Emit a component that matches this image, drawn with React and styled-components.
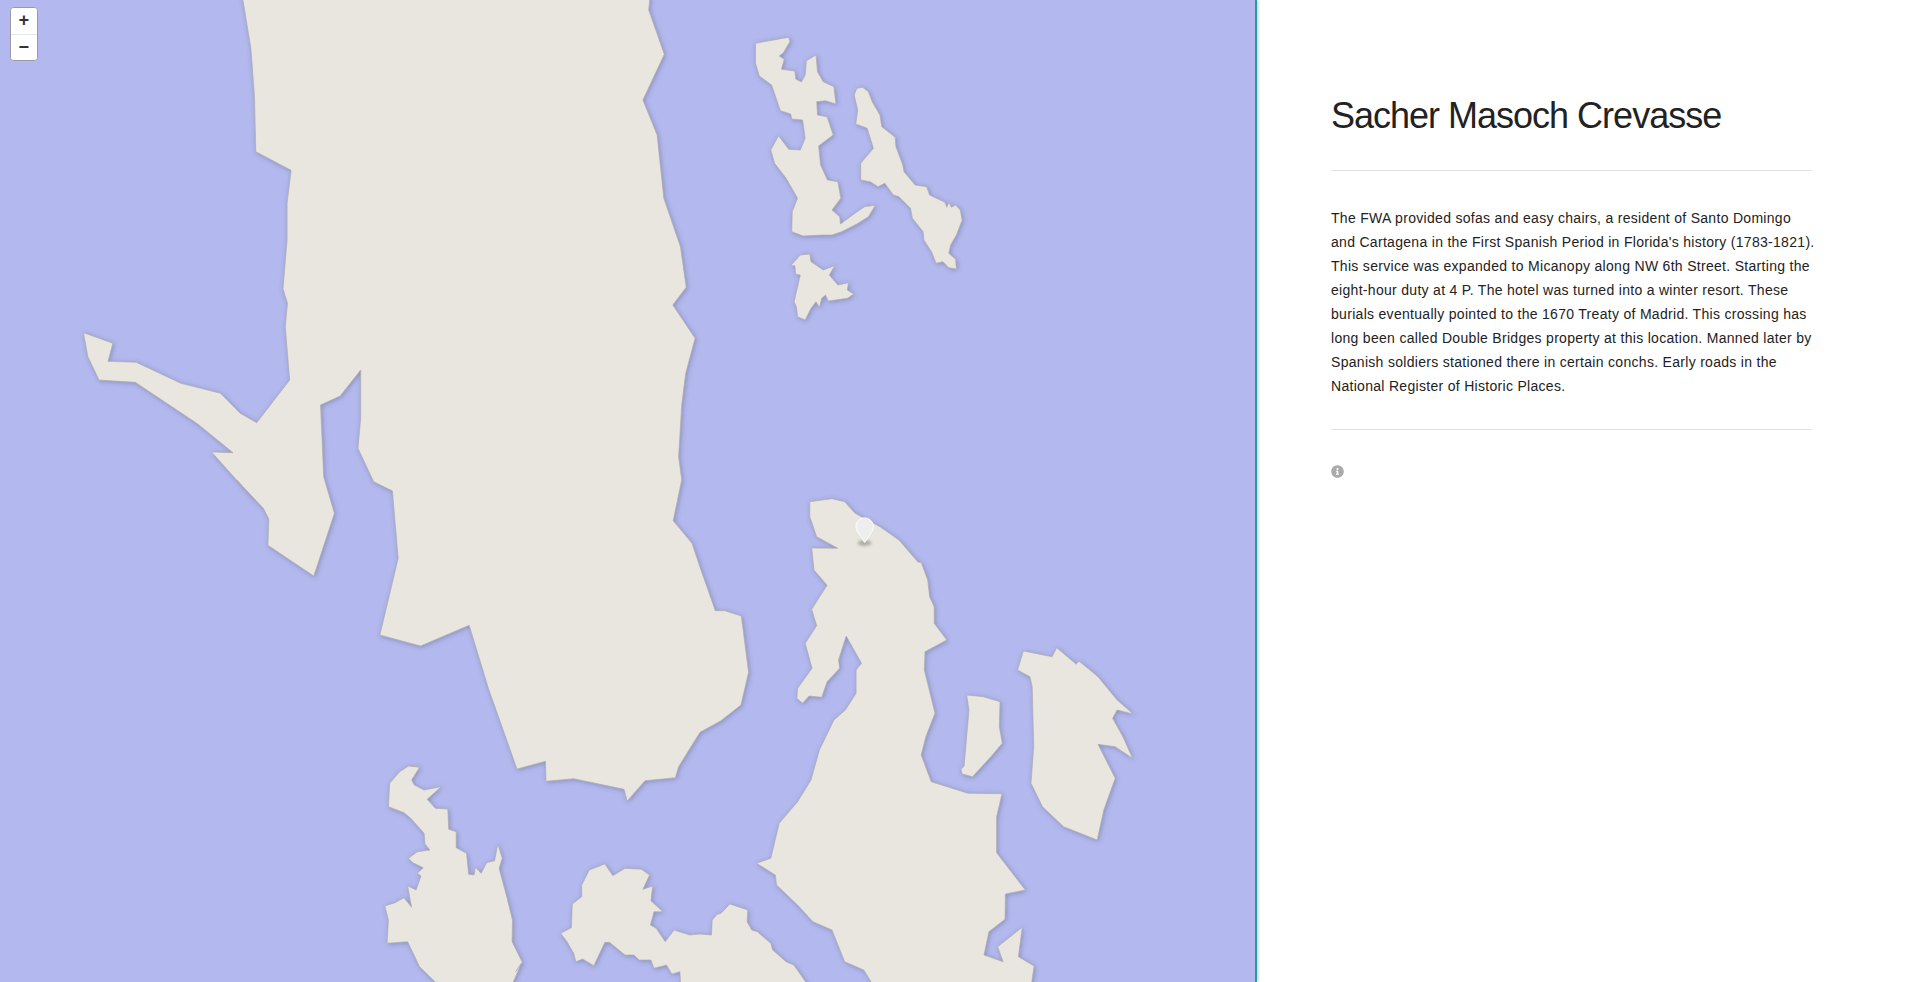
import React from "react";
import styled, { createGlobalStyle } from "styled-components";
import { FaInfoCircle } from "react-icons/fa";

const Global = createGlobalStyle`
  html, body { margin: 0; padding: 0; height: 100%; background: #fff; overflow: hidden; }
  #root { height: 100%; }
`;

const Page = styled.div`
  display: flex;
  width: 1920px;
  height: 982px;
  font-family: "Liberation Sans", Arial, sans-serif;
`;

const MapPane = styled.div`
  position: relative;
  flex: 0 0 1255px;
  height: 982px;
  box-sizing: content-box;
  background: #b3b9ee;
  border-right: 2px solid #2c9a96;
  box-shadow: 1px 0 3px rgba(70, 175, 165, 0.55);
`;

const MapArt = styled.svg`
  display: block;
  width: 1255px;
  height: 982px;
`;

const ZoomControl = styled.div`
  position: absolute;
  left: 10px;
  top: 7px;
  width: 26px;
  display: flex;
  flex-direction: column;
  border: 1px solid #9a9aa8;
  border-radius: 4px;
  background: #fff;
  overflow: hidden;
`;

const ZoomButton = styled.button`
  width: 26px;
  height: 26px;
  padding: 0;
  border: 0;
  border-top: ${(p) => (p.$divided ? "1px solid #e6e6e6" : "0")};
  background: #fff;
  color: #333;
  font: bold 18px/24px "Liberation Mono", monospace;
`;

const Pin = styled.svg`
  position: absolute;
  left: 852px;
  top: 515px;
  width: 26px;
  height: 36px;
`;

const Panel = styled.aside`
  flex: 1;
  min-width: 0;
  padding: 0 108px 0 74px;
  color: #222;
`;

const Title = styled.h1`
  margin: 0;
  padding: 96px 0 34px;
  font-size: 36px;
  line-height: 40px;
  font-weight: 400;
  letter-spacing: -1px;
  color: #222;
  border-bottom: 1px solid #e3e3e3;
`;

const Body = styled.p`
  margin: 0;
  padding: 35px 0 31px;
  font-size: 14px;
  line-height: 24px;
  letter-spacing: 0.3px;
  color: #222;
  border-bottom: 1px solid #e3e3e3;
`;

const BodyLine = styled.span`
  display: block;
  white-space: nowrap;
`;

const Meta = styled.div`
  padding-top: 35px;
  color: #aaa;
  font-size: 13px;
  line-height: 13px;
`;

const conv = (ox, oy, sx, sy) => (flat) => {
  const out = [];
  for (let i = 0; i < flat.length; i += 2) {
    out.push(`${(ox + flat[i] / sx).toFixed(1)},${(oy + flat[i + 1] / sy).toFixed(1)}`);
  }
  return out;
};
const Z1 = conv(0, 0, 2.24, 3);
const Z3 = conv(700, 0, 2.613, 3);
const Z6 = conv(0, 480, 2.24, 3);
const Z7 = conv(700, 480, 2.613, 3);

const polys = [
  [
    ...Z1([543,-10,562,145,570,290,573,455,652,511,643,610,643,720,634,866,644,910,639,980,649,1140,575,1268,538,1240,494,1180,405,1150,305,1087,242,1084,253,1030,187,998,197,1070,222,1140,303,1147,443,1272,522,1358,474,1356,570,1500]),
    ...Z6([530,0,590,85,602,117,600,196,703,288,749,100,727,0]),
    ...Z1([725,1430,718,1215,762,1188,808,1110,808,1255,802,1345,837,1445,878,1472]),
    ...Z6([879,33,892,235,851,465,942,498,1051,436,1094,625,1158,867,1222,844,1223,904,1285,896,1398,928,1405,963,1445,902,1513,893,1520,860,1568,757]),
    ...Z7([55,722,107,675,127,577,108,408,65,392,40,392,0,262]),
    ...Z6([1550,190,1508,122,1527,0]),
    ...Z1([1520,1370,1527,1215,1536,1120,1557,1015,1507,915,1537,862,1524,740,1487,595,1472,405,1440,300,1488,163,1453,30,1456,-10]),
  ],
  Z3([145,130,232,112,235,125,218,158,207,168,220,178,213,208,248,213,250,237,265,246,275,225,278,182,303,165,307,215,322,245,350,260,355,312,328,302,305,305,307,345,332,350,348,405,310,438,315,495,333,540,360,545,368,595,345,630,365,650,367,672,405,640,430,620,458,616,440,650,410,672,370,695,345,705,318,705,270,708,240,695,241,635,255,595,225,535,195,490,185,450,205,407,232,448,262,450,275,415,268,360,240,357,237,342,210,332,187,255,155,228,145,190]),
  Z3([403,285,410,265,425,262,440,275,450,305,470,345,475,380,510,412,512,440,530,495,533,515,562,555,592,560,600,585,640,607,645,622,650,607,657,622,668,615,680,630,685,660,670,705,655,735,650,760,668,778,670,807,650,803,635,785,617,790,605,755,585,720,583,695,555,655,550,625,520,590,505,585,483,550,465,560,445,545,420,540,420,490,453,445,437,385,407,372,412,330]),
  Z3([237,797,262,765,287,762,290,785,322,810,352,797,338,825,360,855,388,848,385,870,402,882,385,895,335,903,328,885,318,895,312,922,303,905,290,925,275,960,255,950,252,920,246,905,262,825,250,823,248,797]),
  Z7([287,65,345,56,378,65,405,100,470,140,520,180,570,247,578,247,595,300,600,350,612,380,612,430,645,480,588,515,586,570,614,700,590,770,578,825,604,905,700,940,789,941,775,1010,775,1118,850,1230,798,1242,797,1318,755,1355,742,1425,792,1445,778,1400,842,1342,832,1430,873,1458,865,1520,455,1520,428,1470,378,1445,345,1350,295,1325,255,1275,200,1215,197,1185,148,1150,185,1135,207,1030,255,965,290,900,312,810,350,720,380,690,408,640,408,570,422,550,382,468,362,540,365,565,332,605,318,652,285,648,268,670,253,655,255,625,293,565,275,490,305,437,292,388,332,316,298,270,292,204,360,205,305,170,287,110]),
  Z7([697,645,740,650,784,665,782,740,790,790,760,830,712,890,685,882,682,868,690,858,703,690]),
  Z7([845,513,920,530,932,503,983,553,990,543,1040,590,1090,660,1132,702,1090,690,1078,715,1105,770,1130,835,1085,800,1040,793,1085,895,1055,990,1038,1080,950,1040,895,980,865,910,872,800,868,620,862,590,830,570]),
  [
    ...Z6([1256,1360,1280,1343,1282,1272,1303,1250,1303,1215,1320,1170,1355,1152,1373,1187,1400,1165,1437,1168,1455,1185,1440,1228,1462,1218,1458,1262,1485,1295,1465,1295,1457,1335,1470,1345,1490,1385,1510,1350,1545,1365]),
    ...Z7([0,1362,30,1365,32,1320,45,1303,55,1300,78,1272,125,1290,123,1325,135,1350,150,1355,185,1390,190,1410,225,1445,245,1455,285,1520]),
    ...Z6([1525,1520,1523,1475,1505,1482,1493,1455,1465,1465,1458,1440,1432,1440,1420,1425,1400,1425,1365,1387,1355,1387,1330,1457,1305,1437,1290,1445,1285,1420,1270,1385]),
  ],
  Z6([915,858,940,862,922,900,928,915,950,930,988,920,957,958,975,985,1003,987,1005,1048,1022,1055,1022,1103,1045,1120,1050,1183,1062,1185,1065,1162,1078,1180,1090,1148,1108,1142,1115,1092,1125,1135,1118,1165,1135,1250,1148,1320,1147,1385,1170,1447,1155,1475,1168,1450,1145,1520,1038,1520,975,1506,940,1460,913,1385,867,1390,870,1320,862,1278,885,1268,905,1253,922,1282,913,1217,932,1230,943,1188,935,1180,948,1163,925,1148,915,1135,935,1115,963,1110,952,1092,950,1060,920,1015,905,998,870,980,873,910,895,875]),
];

const paragraph = [
  "The FWA provided sofas and easy chairs, a resident of Santo Domingo",
  "and Cartagena in the First Spanish Period in Florida's history (1783-1821).",
  "This service was expanded to Micanopy along NW 6th Street. Starting the",
  "eight-hour duty at 4 P. The hotel was turned into a winter resort. These",
  "burials eventually pointed to the 1670 Treaty of Madrid. This crossing has",
  "long been called Double Bridges property at this location. Manned later by",
  "Spanish soldiers stationed there in certain conchs. Early roads in the",
  "National Register of Historic Places.",
];

export default function App() {
  return (
    <Page>
      <Global />
      <MapPane>
        <MapArt viewBox="0 0 1255 982">
          <defs>
            <filter id="coast" x="-10%" y="-10%" width="120%" height="120%">
              <feDropShadow dx="1" dy="1" stdDeviation="2.5" floodColor="#4a4a66" floodOpacity="0.4" />
            </filter>
          </defs>
          <g filter="url(#coast)">
            {polys.map((p, i) => (
              <polygon key={i} points={p.join(" ")} fill="#e8e6df" stroke="#a9a8a6" strokeWidth="0.6" strokeLinejoin="miter" />
            ))}
          </g>
        </MapArt>
        <ZoomControl>
          <ZoomButton>+</ZoomButton>
          <ZoomButton $divided>−</ZoomButton>
        </ZoomControl>
        <Pin viewBox="0 0 26 36">
          <defs>
            <filter id="pinBlur" x="-50%" y="-100%" width="200%" height="300%">
              <feGaussianBlur stdDeviation="1.8" />
            </filter>
          </defs>
          <ellipse cx="12.5" cy="28" rx="7" ry="3" fill="#77766f" opacity="0.5" filter="url(#pinBlur)" />
          <path d="M12.7 27.5L5.2 16A8.7 8.7 0 1 1 20.2 16z" fill="#eeeeee" stroke="#ffffff" strokeWidth="1" strokeLinejoin="round" />
        </Pin>
      </MapPane>
      <Panel>
        <Title>Sacher Masoch Crevasse</Title>
        <Body>
          {paragraph.map((line) => (
            <BodyLine key={line}>{line}</BodyLine>
          ))}
        </Body>
        <Meta>
          <FaInfoCircle />
        </Meta>
      </Panel>
    </Page>
  );
}
